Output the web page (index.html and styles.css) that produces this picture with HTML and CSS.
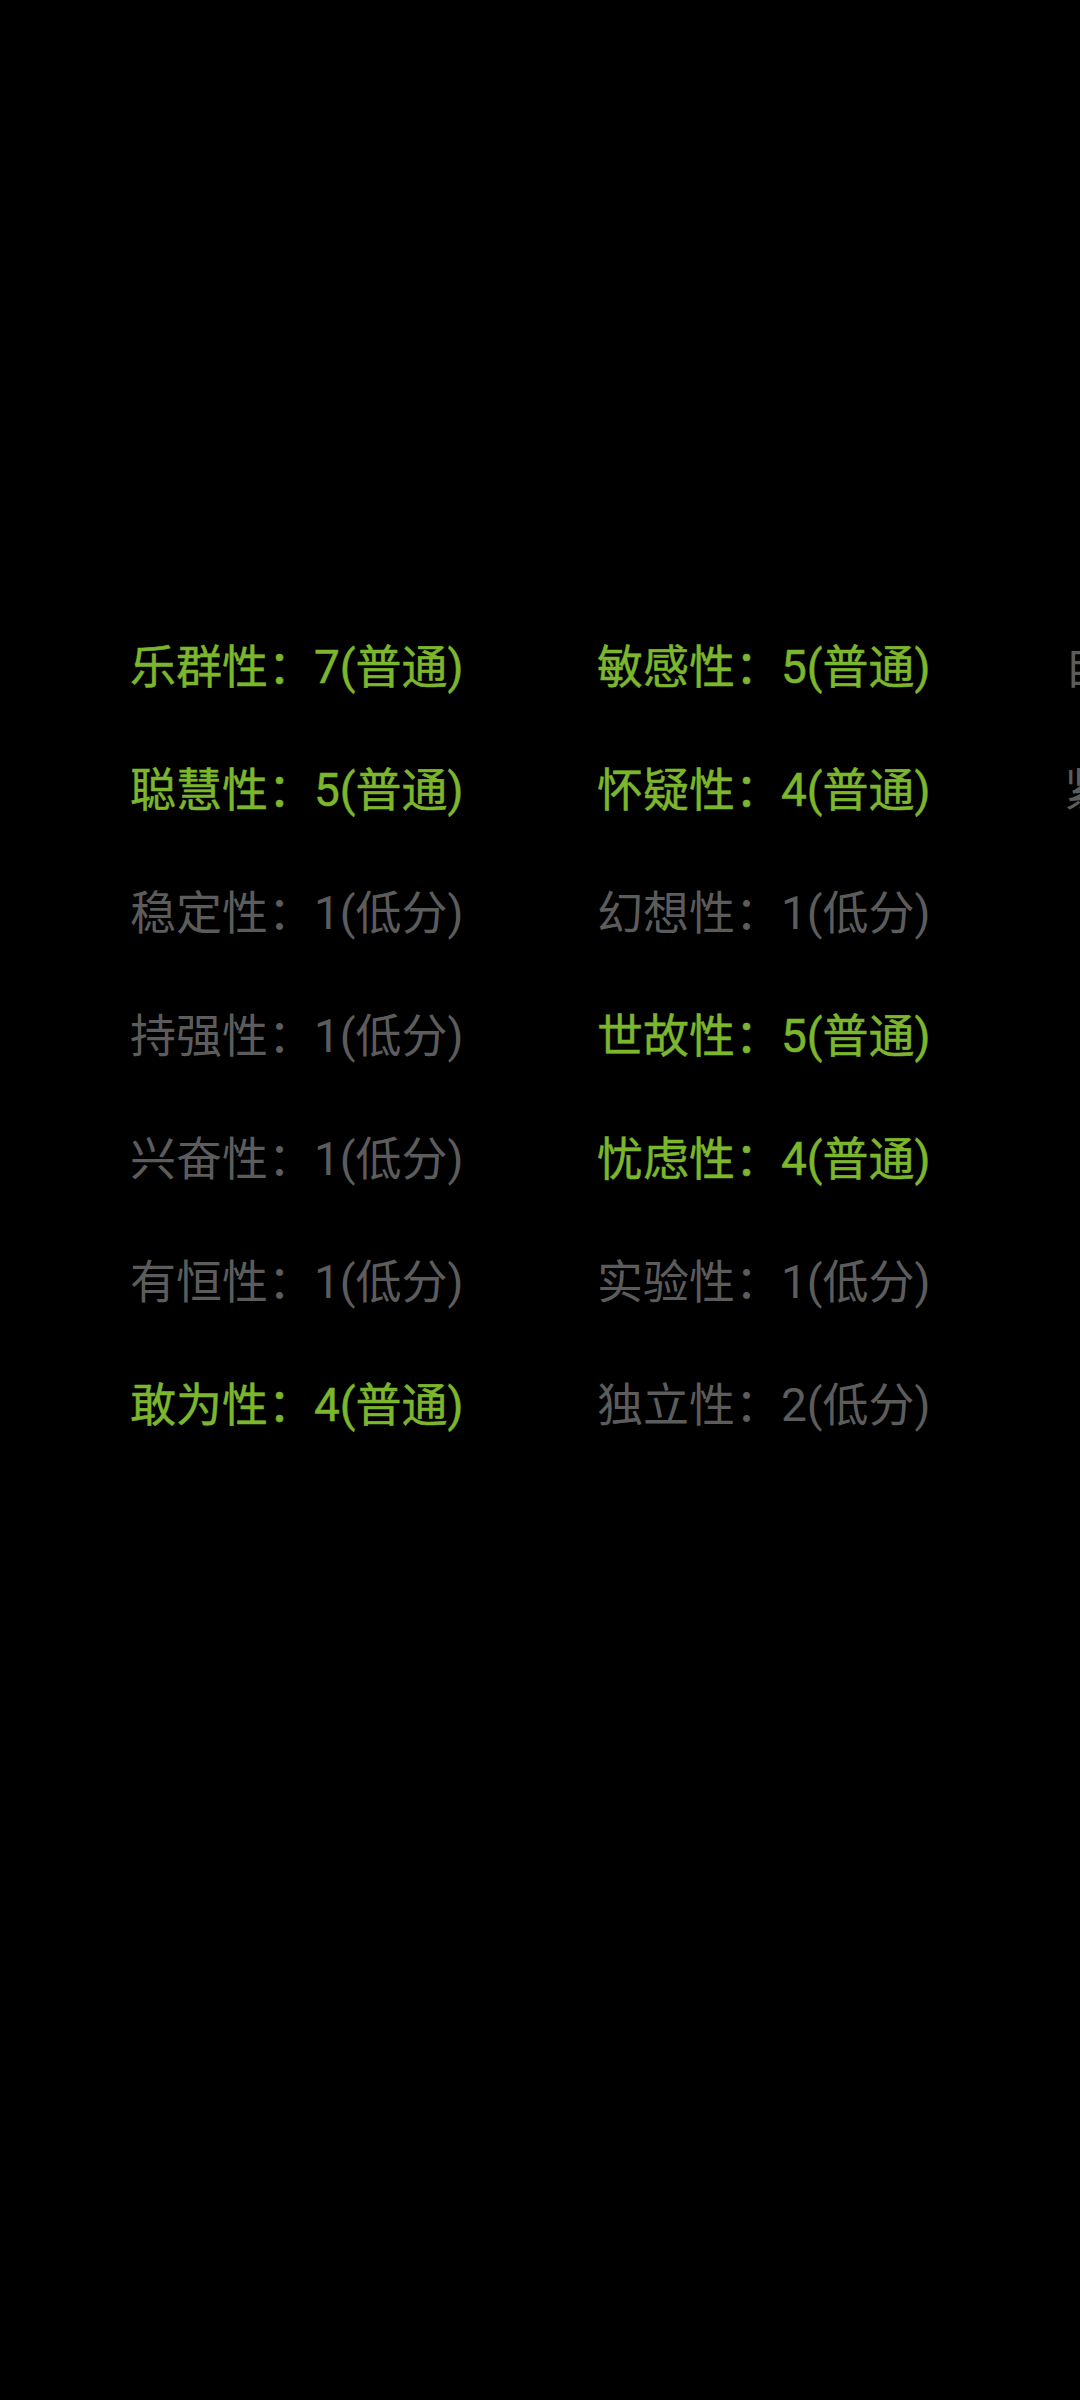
FILE: index.html
```html
<!DOCTYPE html>
<html lang="zh-CN">
<head>
<meta charset="utf-8">
<title>16PF</title>
<link rel="stylesheet" href="styles.css">
</head>
<body>
<div class="screen">
  <div class="grid">
    <div class="cell hi">乐群性：7(普通)</div>
    <div class="cell hi">敏感性：5(普通)</div>
    <div class="cell lo">自律性：1(低分)</div>

    <div class="cell hi">聪慧性：5(普通)</div>
    <div class="cell hi">怀疑性：4(普通)</div>
    <div class="cell lo">紧张性：1(低分)</div>

    <div class="cell lo">稳定性：1(低分)</div>
    <div class="cell lo">幻想性：1(低分)</div>
    <div class="cell"></div>

    <div class="cell lo">持强性：1(低分)</div>
    <div class="cell hi">世故性：5(普通)</div>
    <div class="cell"></div>

    <div class="cell lo">兴奋性：1(低分)</div>
    <div class="cell hi">忧虑性：4(普通)</div>
    <div class="cell"></div>

    <div class="cell lo">有恒性：1(低分)</div>
    <div class="cell lo">实验性：1(低分)</div>
    <div class="cell"></div>

    <div class="cell hi">敢为性：4(普通)</div>
    <div class="cell lo">独立性：2(低分)</div>
    <div class="cell"></div>
  </div>
</div>
</body>
</html>
```
FILE: styles.css
```css
html, body {
  margin: 0;
  padding: 0;
  background: #000;
}
.screen {
  width: 1080px;
  height: 2400px;
  overflow: hidden;
  background: #000;
}
.grid {
  display: grid;
  grid-template-columns: 467px 467px 467px;
  grid-auto-rows: 123px;
  padding-top: 606px;
  padding-left: 130px;
  width: max-content;
}
.cell {
  font-family: Roboto, "Noto Sans CJK SC", sans-serif;
  font-size: 46px;
  line-height: 123px;
  white-space: nowrap;
}
.hi {
  color: #7cb62c;
  -webkit-text-stroke: 0.5px #7cb62c;
}
.lo {
  color: #5c5c5c;
}
```
